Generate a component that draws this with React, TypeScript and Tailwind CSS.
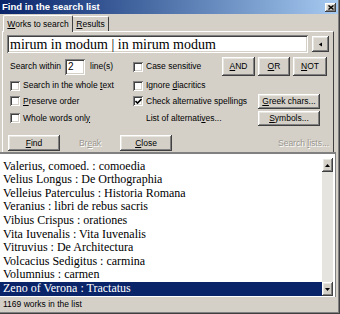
import type { ReactNode } from 'react'

const raised =
  'bg-[#d4d0c8] shadow-[inset_-1px_-1px_0_#404040,inset_1px_1px_0_#ffffff,inset_-2px_-2px_0_#808080,inset_2px_2px_0_#e8e6e1]'
const sunken =
  'bg-white shadow-[inset_1px_1px_0_#808080,inset_-1px_-1px_0_#ffffff,inset_2px_2px_0_#404040,inset_-2px_-2px_0_#d4d0c8]'

const works = [
  'Valerius, comoed. : comoedia',
  'Velius Longus : De Orthographia',
  'Velleius Paterculus : Historia Romana',
  'Veranius : libri de rebus sacris',
  'Vibius Crispus : orationes',
  'Vita Iuvenalis : Vita Iuvenalis',
  'Vitruvius : De Architectura',
  'Volcacius Sedigitus : carmina',
  'Volumnius : carmen',
  'Zeno of Verona : Tractatus',
]

function Btn({ className, children }: { className: string; children: ReactNode }) {
  return <div className={`${raised} flex items-center justify-center ${className}`}>{children}</div>
}

function Check({ checked, children }: { checked?: boolean; children: ReactNode }) {
  return (
    <div className="flex items-center gap-[3px]">
      <div className={`${sunken} w-[10px] h-[10px] flex items-center justify-center`}>
        {checked && (
          <svg width="7" height="7" viewBox="0 0 7 7">
            <path d="M0.5 3 L2.5 5 L6.5 1" stroke="#000" strokeWidth="1.6" fill="none" />
          </svg>
        )}
      </div>
      <span>{children}</span>
    </div>
  )
}

function Disabled({ children }: { children: ReactNode }) {
  return <span className="text-[#9a978f] [text-shadow:1px_1px_0_#ffffff]">{children}</span>
}

export default function App() {
  return (
    <div className="w-[340px] h-[314px] flex flex-col pr-[2px] pb-[2px] bg-[#d4d0c8] shadow-[inset_-1px_-1px_0_#404040,inset_-2px_-2px_0_#808080] font-['Liberation_Sans',Arial,sans-serif] text-[8.5px] text-black overflow-hidden">
      {/* Title bar */}
      <div className="h-[14px] flex items-center justify-between pl-[2px] pr-[2px] bg-linear-to-r from-[#0a246a] to-[#a6caf0]">
        <span className="text-white font-bold text-[9.5px]">Find in the search list</span>
        <Btn className="w-[11px] h-[9px]">
          <svg width="6" height="5" viewBox="0 0 6 5">
            <path d="M0.5 0.5 L5.5 4.5 M5.5 0.5 L0.5 4.5" stroke="#000" strokeWidth="1.4" />
          </svg>
        </Btn>
      </div>

      {/* Tabs */}
      <div className="h-[17px] flex items-end pl-[3px]">
        <div className="relative z-10 h-[17px] -mb-px w-[70px] flex items-center justify-center bg-[#d4d0c8] border-l border-t border-white border-r border-r-[#404040] rounded-t-[2px]">
          <span>
            <span className="underline">W</span>orks to search
          </span>
        </div>
        <div className="h-[15px] w-[36px] flex items-center justify-center border-t border-white border-r border-r-[#404040] rounded-tr-[2px]">
          <span>
            <span className="underline">R</span>esults
          </span>
        </div>
      </div>

      {/* Tab panel */}
      <div className="h-[121px] ml-[2px] w-[332px] border-t border-l border-white border-r border-r-[#404040] flex flex-col">
        <div className="mt-[3px] pl-[4px] flex items-center">
          <div className={`${sunken} w-[301px] h-[18px] flex items-center pl-[3px] pt-[1px]`}>
            <span className="font-['Liberation_Serif','Times_New_Roman',serif] text-[14px] leading-none">
              mirum in modum | in mirum modum
            </span>
          </div>
          <Btn className="ml-[4px] w-[17px] h-[16px]">
            <svg width="5" height="5" viewBox="0 0 5 5">
              <path d="M4 0.5 L0.8 2.5 L4 4.5 Z" fill="#000" />
            </svg>
          </Btn>
        </div>

        {/* Row 1 */}
        <div className="mt-[4px] h-[19px] flex items-center pl-[7px]">
          <div className="w-[123px] flex items-center">
            <span>Search within</span>
            <div className={`${sunken} ml-[4px] w-[20px] h-[16px] flex items-center pl-[3px] text-[10px]`}>2</div>
            <span className="ml-[5px]">line(s)</span>
          </div>
          <div className="w-[89px]">
            <Check>Case sensitive</Check>
          </div>
          <div className="flex gap-[3px] h-[19px]">
            <Btn className="w-[33px] h-[19px]">
              <span>
                <span className="underline">A</span>ND
              </span>
            </Btn>
            <Btn className="w-[32px] h-[19px]">
              <span>
                <span className="underline">O</span>R
              </span>
            </Btn>
            <Btn className="w-[34px] h-[19px]">
              <span>
                <span className="underline">N</span>OT
              </span>
            </Btn>
          </div>
        </div>

        {/* Row 2 */}
        <div className="mt-[2px] h-[15px] flex items-center pl-[7px]">
          <div className="w-[123px]">
            <Check>
              Search in the whole <span className="underline">t</span>ext
            </Check>
          </div>
          <Check>
            Ignore <span className="underline">d</span>iacritics
          </Check>
        </div>

        {/* Row 3 */}
        <div className="h-[16px] flex items-center pl-[7px]">
          <div className="w-[123px]">
            <Check>
              <span className="underline">P</span>reserve order
            </Check>
          </div>
          <div className="w-[125px]">
            <Check checked>Check alternative spellings</Check>
          </div>
          <Btn className="w-[62px] h-[15px]">
            <span>
              <span className="underline">G</span>reek chars...
            </span>
          </Btn>
        </div>

        {/* Row 4 */}
        <div className="mt-[1px] h-[16px] flex items-center pl-[7px]">
          <div className="w-[123px]">
            <Check>
              Whole words onl<span className="underline">y</span>
            </Check>
          </div>
          <div className="w-[125px] pl-[13px]">
            List of alternati<span className="underline">v</span>es...
          </div>
          <Btn className="w-[62px] h-[15px]">
            <span>
              <span className="underline">S</span>ymbols...
            </span>
          </Btn>
        </div>

        {/* Row 5 */}
        <div className="mt-[9px] h-[16px] flex items-center pl-[5px]">
          <Btn className="w-[52px] h-[16px]">
            <span>
              <span className="underline">F</span>ind
            </span>
          </Btn>
          <div className="w-[60px] text-center">
            <Disabled>
              Br<span className="underline">e</span>ak
            </Disabled>
          </div>
          <Btn className="w-[52px] h-[16px]">
            <span>
              <span className="underline">C</span>lose
            </span>
          </Btn>
          <div className="ml-[106px]">
            <Disabled>
              Search <span className="underline">l</span>ists...
            </Disabled>
          </div>
        </div>
      </div>

      {/* Works list */}
      <div className="h-[145px] w-[336px] flex bg-white border-t-2 border-t-[#808080] border-r border-r-[#808080]">
        <div className="flex-1 pt-[5.6px] font-['Liberation_Serif','Times_New_Roman',serif] text-[12px]">
          {works.map((w, i) => {
            const selected = i === works.length - 1
            return (
              <div
                key={w}
                className={`h-[13.6px] leading-[13.6px] pl-[3px] whitespace-nowrap ${
                  selected ? 'bg-[#0a246a] text-white' : ''
                }`}
              >
                {w}
              </div>
            )
          })}
        </div>
        <div className="w-[11px] mt-[4px] mb-[1px] mr-[2px] flex flex-col bg-[#e6e4de]">
          <Btn className="h-[14px]">
            <svg width="5" height="3" viewBox="0 0 5 3">
              <path d="M0 3 L2.5 0 L5 3 Z" fill="#000" />
            </svg>
          </Btn>
          <div className="flex-1" />
          <Btn className="h-[14px]">
            <svg width="5" height="3" viewBox="0 0 5 3">
              <path d="M0 0 L2.5 3 L5 0 Z" fill="#000" />
            </svg>
          </Btn>
        </div>
      </div>

      {/* Status */}
      <div className="h-[15px] flex items-center pl-[3px]">1169 works in the list</div>
    </div>
  )
}
